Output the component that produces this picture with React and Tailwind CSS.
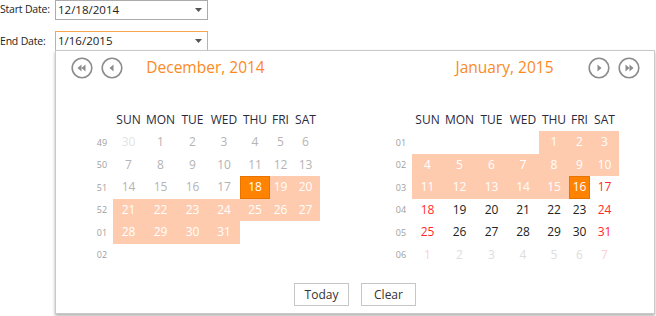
import React from "react";

const COLS = "grid grid-cols-[22px_31px_33px_31px_32px_30px_21px_29px]";

const dec = [
  ["49", [["30", "prev"], ["1", "dis"], ["2", "dis"], ["3", "dis"], ["4", "dis"], ["5", "dis"], ["6", "dis"]]],
  ["50", [["7", "dis"], ["8", "dis"], ["9", "dis"], ["10", "dis"], ["11", "dis"], ["12", "dis"], ["13", "dis"]]],
  ["51", [["14", "dis"], ["15", "dis"], ["16", "dis"], ["17", "dis"], ["18", "sel"], ["19", "range"], ["20", "range"]]],
  ["52", [["21", "range"], ["22", "range"], ["23", "range"], ["24", "range"], ["25", "range"], ["26", "range"], ["27", "range"]]],
  ["01", [["28", "range"], ["29", "range"], ["30", "range"], ["31", "range"], ["", "empty"], ["", "empty"], ["", "empty"]]],
  ["02", [["", "empty"], ["", "empty"], ["", "empty"], ["", "empty"], ["", "empty"], ["", "empty"], ["", "empty"]]],
];

const jan = [
  ["01", [["", "empty"], ["", "empty"], ["", "empty"], ["", "empty"], ["1", "range"], ["2", "range"], ["3", "range"]]],
  ["02", [["4", "range"], ["5", "range"], ["6", "range"], ["7", "range"], ["8", "range"], ["9", "range"], ["10", "range"]]],
  ["03", [["11", "range"], ["12", "range"], ["13", "range"], ["14", "range"], ["15", "range"], ["16", "sel"], ["17", "wkend"]]],
  ["04", [["18", "wkend"], ["19", "norm"], ["20", "norm"], ["21", "norm"], ["22", "norm"], ["23", "norm"], ["24", "wkend"]]],
  ["05", [["25", "wkend"], ["26", "norm"], ["27", "norm"], ["28", "norm"], ["29", "norm"], ["30", "norm"], ["31", "wkend"]]],
  ["06", [["1", "nextwk"], ["2", "next"], ["3", "next"], ["4", "next"], ["5", "next"], ["6", "next"], ["7", "nextwk"]]],
];

const cellCls = {
  prev: "text-[#e4e4e4]",
  dis: "text-[#b4b4b4]",
  range: "bg-[#ffcbae] text-white",
  sel: "bg-[#ff8200] text-white border border-[#e87400]",
  norm: "text-[#222]",
  wkend: "text-[#ff2a2a]",
  next: "text-[#dddddd]",
  nextwk: "text-[#fcd0d0]",
  empty: "",
};

function NavBtn({ dir, double }) {
  const polys = [];
  if (dir === "left") {
    if (double) {
      polys.push("6.5,11 10.5,7.5 10.5,14.5", "10.5,11 14.5,7.5 14.5,14.5");
    } else {
      polys.push("8.5,11 12.5,7.5 12.5,14.5");
    }
  } else {
    if (double) {
      polys.push("15.5,11 11.5,7.5 11.5,14.5", "11.5,11 7.5,7.5 7.5,14.5");
    } else {
      polys.push("13.5,11 9.5,7.5 9.5,14.5");
    }
  }
  return (
    <svg width="22" height="22" viewBox="0 0 22 22" className="block">
      <circle cx="11" cy="11" r="9.8" fill="none" stroke="#8c8c8c" strokeWidth="1.6" />
      {polys.map((p, i) => (
        <polygon key={i} points={p} fill="#8c8c8c" />
      ))}
    </svg>
  );
}

function Month({ title, weeks, side }) {
  return (
    <div className="w-[299px] flex flex-col">
      <div className="grid grid-cols-[1fr_auto_1fr] items-center h-[34px]">
        <div className="flex gap-[8px] pl-[15px]">
          {side === "left" && (
            <>
              <NavBtn dir="left" double />
              <NavBtn dir="left" />
            </>
          )}
        </div>
        <div className="text-[15.5px] text-[#fb8a24] leading-none">{title}</div>
        <div className="flex gap-[8px] justify-end pr-[14px]">
          {side === "right" && (
            <>
              <NavBtn dir="right" />
              <NavBtn dir="right" double />
            </>
          )}
        </div>
      </div>
      <div className="mt-[24px] mx-auto w-[229px]">
        <div className={`${COLS} h-[22px] items-center text-[12px] text-[#2a2a3c]`}>
          <div />
          {["SUN", "MON", "TUE", "WED", "THU", "FRI", "SAT"].map((d) => (
            <div key={d} className="text-center">{d}</div>
          ))}
        </div>
        {weeks.map(([wk, days]) => (
          <div key={wk} className={`${COLS} h-[22.5px]`}>
            <div className="flex items-center justify-center text-[9px] text-[#a0a0a0]">{wk}</div>
            {days.map(([d, t], i) => (
              <div
                key={i}
                className={`flex items-center justify-center text-[12px] ${cellCls[t]}`}
              >
                {d}
              </div>
            ))}
          </div>
        ))}
      </div>
    </div>
  );
}

function Caret() {
  return (
    <svg width="7" height="4" viewBox="0 0 7 4" className="block mr-[5px]">
      <polygon points="0,0 7,0 3.5,4" fill="#555" />
    </svg>
  );
}

export default function App() {
  return (
    <div className="font-['Open_Sans',sans-serif] w-[656px] h-[316px] bg-white overflow-hidden text-[#222]">
      <div className="flex items-center h-[20px]">
        <div className="w-[55px] shrink-0 whitespace-nowrap text-[10.5px] tracking-[-0.2px]">Start Date:</div>
        <div className="w-[153px] h-[20px] border border-[#ababab] flex items-center justify-between pl-[2px]">
          <span className="text-[11.5px]">12/18/2014</span>
          <Caret />
        </div>
      </div>
      <div className="flex items-end h-[19px] mt-[11px]">
        <div className="w-[55px] shrink-0 whitespace-nowrap text-[10.5px] tracking-[-0.2px] self-center mt-[3px]">End Date:</div>
        <div className="w-[153px] h-[19px] border-t border-l border-r border-[#f9a54f] flex items-center justify-between pl-[2px]">
          <span className="text-[11.5px]">1/16/2015</span>
          <Caret />
        </div>
      </div>
      <div className="ml-[55px] w-[600px] h-[264px] border border-[#c9c9c9] shadow-[0_2px_3px_rgba(0,0,0,0.3)] bg-white flex flex-col">
        <div className="flex">
          <Month title="December, 2014" weeks={dec} side="left" />
          <Month title="January, 2015" weeks={jan} side="right" />
        </div>
        <div className="flex justify-center gap-[12px] mt-[17px]">
          <button className="w-[55px] h-[23px] border border-[#c6c6c6] bg-white text-[12px] text-[#333]">Today</button>
          <button className="w-[55px] h-[23px] border border-[#c6c6c6] bg-white text-[12px] text-[#333]">Clear</button>
        </div>
      </div>
    </div>
  );
}
